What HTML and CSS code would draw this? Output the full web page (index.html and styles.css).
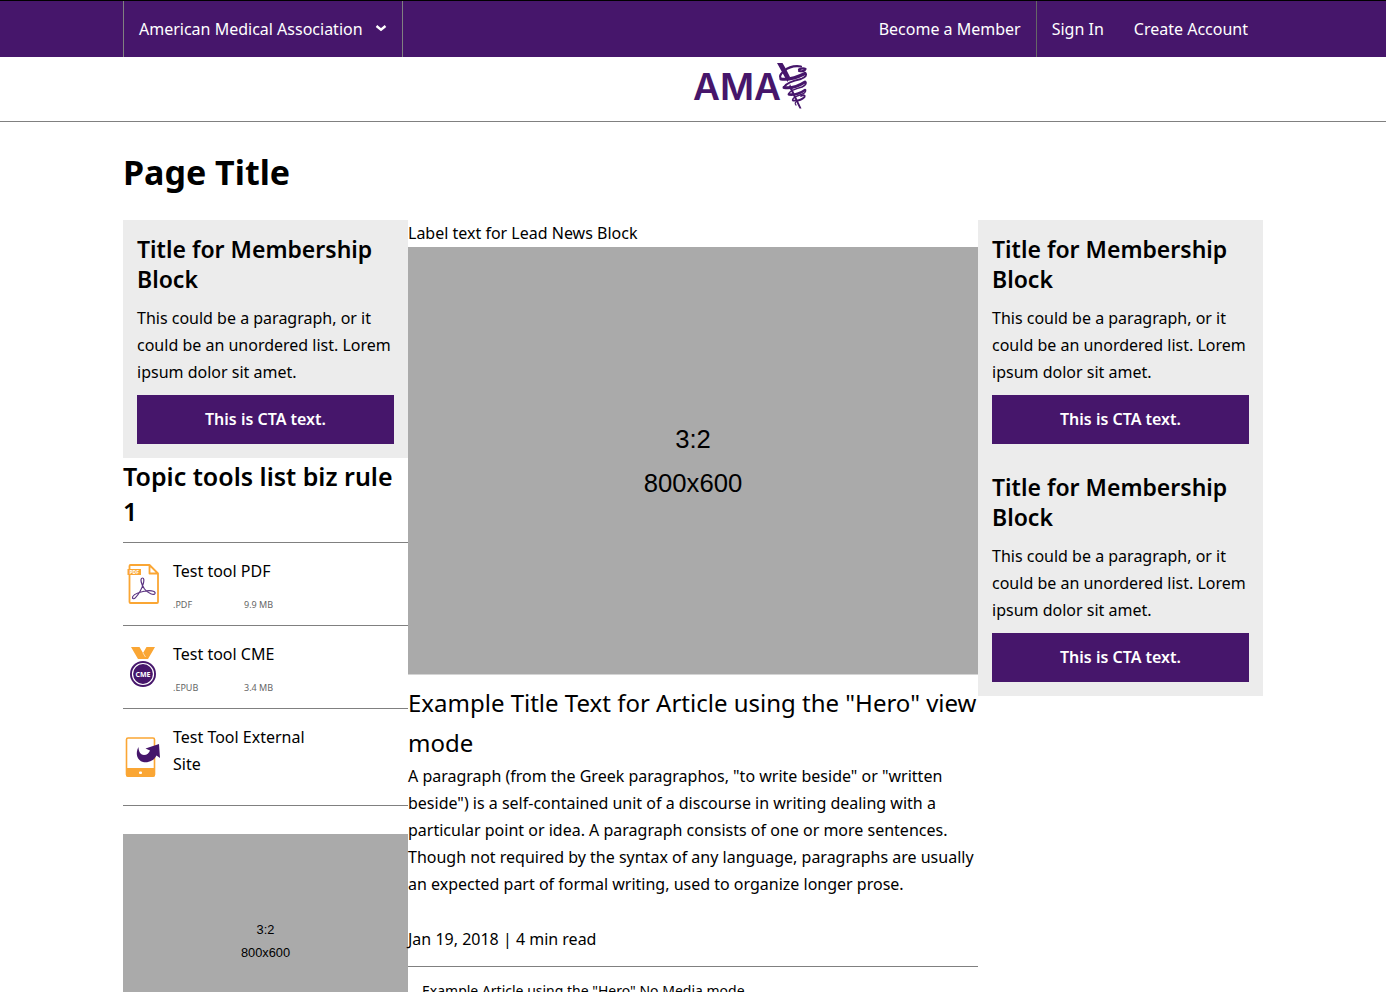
FILE: index.html
```html
<!DOCTYPE html>
<html lang="en">
<head>
<meta charset="utf-8">
<meta name="viewport" content="width=device-width, initial-scale=1">
<title>Page Title</title>
<link rel="stylesheet" href="styles.css">
</head>
<body>
<nav class="topbar">
  <div class="container topbar-inner">
    <button class="org-menu" type="button">American Medical Association
      <svg class="chevron" viewBox="0 0 12 8" aria-hidden="true"><path d="M1.500 1 L6 4.700 L10.500 1" fill="none" stroke="currentColor" stroke-width="2.400"/></svg>
    </button>
    <div class="account">
      <a class="join" href="#">Become a Member</a>
      <a href="#">Sign In</a>
      <a href="#">Create Account</a>
    </div>
  </div>
</nav>
<header class="masthead">
  <a class="logo" href="#" aria-label="AMA home">
    <svg viewBox="0 0 115 48" aria-hidden="true">
      <text class="logo-text" x="0" y="37">AMA</text>
      <path fill="#46166b" d="M84 0 L89.500 0 L93 6 L97 14 L94.500 19Z M97 21 L108.500 45.500 L106.500 45.500 L96 24Z"/>
      <g fill="none" stroke="#46166b" stroke-linecap="round" stroke-linejoin="round">
        <path stroke-width="2.200" d="M106 6.500 Q110 4.500 112.500 6 Q111 9 106 8"/>
        <path stroke-width="2.200" d="M108 3.500 Q98 2 91 8 Q85 13 88 16"/>
        <path stroke-width="3.200" d="M88 16 Q98 17.500 112 10.500"/>
        <path stroke-width="1.800" d="M112.500 10.500 Q115 13 108 16 Q94 19 91 24"/>
        <path stroke-width="3" d="M91 24.500 Q101 26 112 19"/>
        <path stroke-width="1.600" d="M112.500 19 Q114.500 21 109 24 Q97 27 95.500 31"/>
        <path stroke-width="2.600" d="M96 31.500 Q104 32.500 112 27"/>
        <path stroke-width="1.400" d="M112.500 27 Q113.500 30 107 32 Q100 34 99.500 37"/>
        <path stroke-width="1.800" d="M100 37.500 Q107 38.500 111.500 34 Q112.500 31 108 33"/>
        <path stroke-width="1.200" d="M104 38 Q101 40 103 42"/>
      </g>
    </svg>
  </a>
</header>
<main class="container">
  <h1 class="page-title">Page Title</h1>
  <div class="columns">
    <div class="side">
      <section class="membership">
        <h2>Title for Membership Block</h2>
        <p>This could be a paragraph, or it could be an unordered list. Lorem ipsum dolor sit amet.</p>
        <a class="cta" href="#">This is CTA text.</a>
      </section>
      <section class="tools">
        <h2>Topic tools list biz rule 1</h2>
        <ul>
          <li>
            <svg class="tool-icon" viewBox="0 0 40 44" aria-hidden="true">
              <path d="M6.500 8 V4 Q6.500 3 7.500 3 H26.500 L35 11.500 V40 Q35 41 34 41 H7.500 Q6.500 41 6.500 40 V12 M26.500 3 V11.500 H35" fill="none" stroke="#faa634" stroke-width="1.800" stroke-linejoin="round"/>
              <rect x="4.500" y="7" width="13.500" height="6" fill="#faa634"/>
              <text class="pdf-label" x="11.200" y="12">PDF</text>
              <path d="M19.500 16 C16.500 16 18.500 23 21.500 27 C25 31.500 31 33.500 32 31.500 C33 28.500 26 28 20 29.500 C14 31 9 33.500 9.500 36 C10.500 38.500 14 34.500 17 29.500 C20 24.500 22.500 16 19.500 16Z" fill="none" stroke="#5b3381" stroke-width="1.200"/>
            </svg>
            <div class="tool-body">
              <a href="#">Test tool PDF</a>
              <div class="meta"><span>.PDF</span><span>9.9 MB</span></div>
            </div>
          </li>
          <li>
            <svg class="tool-icon" viewBox="0 0 40 44" aria-hidden="true">
              <path d="M8 2 H16.500 L20 8 L23.500 2 H32 L25 14 H15Z" fill="#faa634"/>
              <path d="M20 8 L22.500 12" stroke="#fff" stroke-width=".6"/>
              <circle cx="20" cy="29" r="13" fill="#46166b"/>
              <circle cx="20" cy="29" r="10.500" fill="none" stroke="#fff" stroke-width="1.200"/>
              <text class="cme-label" x="20" y="31.500">CME</text>
            </svg>
            <div class="tool-body">
              <a href="#">Test tool CME</a>
              <div class="meta"><span>.EPUB</span><span>3.4 MB</span></div>
            </div>
          </li>
          <li class="external">
            <svg class="tool-icon" viewBox="0 0 40 44" aria-hidden="true">
              <rect x="3.500" y="3" width="28" height="38" rx="1.500" fill="none" stroke="#faa634" stroke-width="1.600"/>
              <path d="M3 33 H32 V40 Q32 42 30 42 H5 Q3 42 3 40Z" fill="#faa634"/>
              <rect x="16" y="36.500" width="3" height="2.500" rx="1" fill="#fff"/>
              <path d="M22.500 13.500 L36 9 L37 23 L33.500 20.500 C31 26 25 28 20 27 C14 25.500 12 18 15.500 12 C15.500 17 18 20 21 20 C24 20 26 18 27 15.500Z" fill="#46166b"/>
            </svg>
            <div class="tool-body"><a href="#">Test Tool External Site</a></div>
          </li>
        </ul>
      </section>
      <svg class="placeholder" viewBox="0 0 800 600" role="img" aria-label="Placeholder">
        <rect width="800" height="600" fill="#aaa"/>
        <text x="400" y="282">3:2</text>
        <text x="400" y="344">800x600</text>
      </svg>
    </div>
    <article class="lead">
      <div>Label text for Lead News Block</div>
      <svg class="placeholder" viewBox="0 0 800 600" role="img" aria-label="Placeholder">
        <rect width="800" height="600" fill="#aaa"/>
        <text x="400" y="282">3:2</text>
        <text x="400" y="344">800x600</text>
      </svg>
      <h2>Example Title Text for Article using the "Hero" view mode</h2>
      <p>A paragraph (from the Greek paragraphos, "to write beside" or "written beside") is a self-contained unit of a discourse in writing dealing with a particular point or idea. A paragraph consists of one or more sentences. Though not required by the syntax of any language, paragraphs are usually an expected part of formal writing, used to organize longer prose.</p>
      <p class="date">Jan 19, 2018 | 4 min read</p>
      <a class="related" href="#">Example Article using the "Hero" No Media mode</a>
    </article>
    <div class="side">
      <section class="membership">
        <h2>Title for Membership Block</h2>
        <p>This could be a paragraph, or it could be an unordered list. Lorem ipsum dolor sit amet.</p>
        <a class="cta" href="#">This is CTA text.</a>
      </section>
      <section class="membership">
        <h2>Title for Membership Block</h2>
        <p>This could be a paragraph, or it could be an unordered list. Lorem ipsum dolor sit amet.</p>
        <a class="cta" href="#">This is CTA text.</a>
      </section>
    </div>
  </div>
</main>
</body>
</html>
```
FILE: styles.css
```css
* { box-sizing: border-box; }
body {
  margin: 0;
  background: #fff;
  color: #000;
  font: 16px/27px "Noto Sans", "Open Sans", sans-serif;
}
h1, h2, p, ul { margin: 0; padding: 0; }
ul { list-style: none; }
a { color: inherit; text-decoration: none; }
.container { max-width: 1140px; margin: 0 auto; }
.topbar { background: #46166b; border-top: 1px solid #000; color: #fff; }
.topbar-inner { display: flex; justify-content: space-between; }
.org-menu {
  display: flex;
  align-items: center;
  gap: 12px;
  height: 56px;
  padding: 0 15px;
  border: 0;
  border-left: 1px solid #808080;
  border-right: 1px solid #808080;
  background: none;
  color: inherit;
  font: inherit;
}
.chevron { width: 12px; height: 8px; }
.account { display: flex; line-height: 56px; }
.account a { padding: 0 15px; }
.account .join { border-right: 1px solid #666; }
.masthead { padding: 6px 0 10px 50%; border-bottom: 1px solid #808080; }
.logo { display: block; width: 115px; height: 48px; }
.logo svg { display: block; width: 100%; height: 100%; }
.logo-text { font: 600 37px Inter, sans-serif; fill: #46166b; }
.page-title { padding: 26px 0 23px; font-size: 34px; line-height: 49px; font-weight: 700; }
.columns { display: grid; grid-template-columns: 1fr 2fr 1fr; align-items: start; }
.membership { padding: 14px; background: #ececec; }
.membership h2 { margin-bottom: 11px; font-size: 23px; line-height: 30px; font-weight: 600; }
.cta {
  display: block;
  margin-top: 9px;
  background: #46166b;
  color: #fff;
  font-weight: 600;
  line-height: 49px;
  text-align: center;
}
.tools { margin-bottom: 28px; }
.tools h2 { padding: 1px 0 13px; font-size: 25px; line-height: 35px; font-weight: 600; }
.tools ul { border-top: 1px solid #808080; }
.tools li { display: flex; gap: 10px; padding: 15px 0 10px; border-bottom: 1px solid #808080; }
.tools .external { padding-bottom: 26px; }
.external .tool-icon { margin-top: 11px; }
.tool-icon { flex: none; width: 40px; height: 44px; margin-top: 4px; }
.tool-body { width: 150px; }
.meta { display: flex; margin-top: 10px; color: #666; font-size: 9px; line-height: 20px; }
.meta span { flex: none; width: 71px; }
.placeholder { display: block; width: 100%; height: auto; }
.placeholder text { font: 36px "Liberation Sans", Arial, sans-serif; text-anchor: middle; }
.pdf-label { font: 700 5px "Noto Sans", sans-serif; fill: #fff; text-anchor: middle; }
.cme-label { font: 700 7px "Open Sans", sans-serif; fill: #fff; text-anchor: middle; }
.lead h2 { padding-top: 8px; font-size: 24px; line-height: 40px; font-weight: 400; }
.date { padding: 28px 0 13px; border-bottom: 1px solid #808080; }
.related { display: block; padding: 14px; font-size: 14px; line-height: 20px; }
```
